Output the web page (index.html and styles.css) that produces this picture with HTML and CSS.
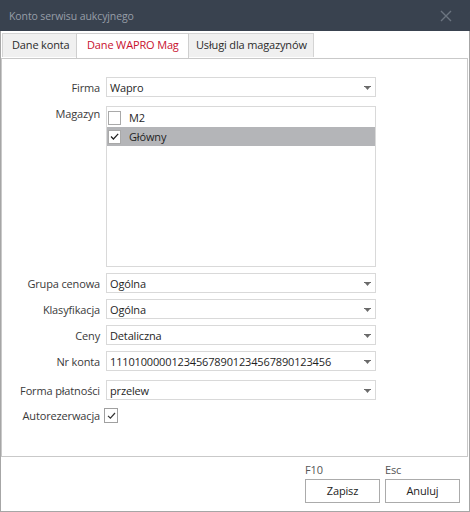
FILE: index.html
```html
<!DOCTYPE html>
<html lang="pl">
<head>
<meta charset="utf-8">
<title>Konto serwisu aukcyjnego</title>
<link rel="stylesheet" href="styles.css">
</head>
<body>
<div class="window">
  <div class="titlebar">
    <span class="title">Konto serwisu aukcyjnego</span>
    <svg class="close" width="12" height="12" viewBox="0 0 12 12"><path d="M1 1 L11 11 M11 1 L1 11" stroke="#6c7581" stroke-width="1.4" fill="none"/></svg>
  </div>
  <div class="tabs">
    <div class="tab t1">Dane konta</div>
    <div class="tab t2 active">Dane WAPRO Mag</div>
    <div class="tab t3">Usługi dla magazynów</div>
  </div>
  <div class="panel">
    <div class="form">
      <div class="label">Firma</div>
      <div class="combo"><span>Wapro</span><svg class="arrow" width="7" height="4" viewBox="0 0 7 4"><rect x="0" y="0" width="7" height="1" fill="#6a6a6a"/><polygon points="1,1 6,1 3.5,4" fill="#6a6a6a"/></svg></div>

      <div class="label top">Magazyn</div>
      <div class="list">
        <div class="item"><span class="box"></span><span>M2</span></div>
        <div class="item selected"><span class="box"><svg width="11" height="11" viewBox="0 0 11 11"><path d="M2 5.5 L4.4 8 L9.2 2.8" stroke="#222" stroke-width="1.2" fill="none"/></svg></span><span>Główny</span></div>
      </div>

      <div class="label">Grupa cenowa</div>
      <div class="combo"><span>Ogólna</span><svg class="arrow" width="7" height="4" viewBox="0 0 7 4"><rect x="0" y="0" width="7" height="1" fill="#6a6a6a"/><polygon points="1,1 6,1 3.5,4" fill="#6a6a6a"/></svg></div>

      <div class="label">Klasyfikacja</div>
      <div class="combo"><span>Ogólna</span><svg class="arrow" width="7" height="4" viewBox="0 0 7 4"><rect x="0" y="0" width="7" height="1" fill="#6a6a6a"/><polygon points="1,1 6,1 3.5,4" fill="#6a6a6a"/></svg></div>

      <div class="label">Ceny</div>
      <div class="combo"><span>Detaliczna</span><svg class="arrow" width="7" height="4" viewBox="0 0 7 4"><rect x="0" y="0" width="7" height="1" fill="#6a6a6a"/><polygon points="1,1 6,1 3.5,4" fill="#6a6a6a"/></svg></div>

      <div class="label">Nr konta</div>
      <div class="combo"><span>111010000012345678901234567890123456</span><svg class="arrow" width="7" height="4" viewBox="0 0 7 4"><rect x="0" y="0" width="7" height="1" fill="#6a6a6a"/><polygon points="1,1 6,1 3.5,4" fill="#6a6a6a"/></svg></div>

      <div class="label gap">Forma płatności</div>
      <div class="combo gap"><span>przelew</span><svg class="arrow" width="7" height="4" viewBox="0 0 7 4"><rect x="0" y="0" width="7" height="1" fill="#6a6a6a"/><polygon points="1,1 6,1 3.5,4" fill="#6a6a6a"/></svg></div>

      <div class="label chk-label">Autorezerwacja</div>
      <div class="chk-cell"><span class="box small"><svg width="11" height="11" viewBox="0 0 11 11"><path d="M2 5.8 L4.4 8.2 L9 3" stroke="#333" stroke-width="1.2" fill="none"/></svg></span></div>
    </div>
  </div>
  <div class="footer">
    <div class="btncol"><div class="key">F10</div><div class="btn">Zapisz</div></div>
    <div class="btncol"><div class="key">Esc</div><div class="btn">Anuluj</div></div>
  </div>
</div>
</body>
</html>
```

FILE: styles.css
```css
* { box-sizing: border-box; }
html, body { margin: 0; padding: 0; background: #ffffff; }
body {
  font-family: "Open Sans", "Noto Sans", sans-serif;
  font-size: 11px;
  letter-spacing: -0.15px;
  color: #262626;
}
.window {
  width: 470px;
  height: 512px;
  border: 1px solid #a6a6a6;
  border-top: none;
  display: flex;
  flex-direction: column;
  background: #fff;
}
.titlebar {
  flex: 0 0 31px;
  margin: 0 -1px;
  background: #39424f;
  color: #979ea8;
  font-size: 10.5px;
  letter-spacing: -0.1px;
  display: flex;
  align-items: center;
  justify-content: space-between;
  padding: 0 18px 0 9px;
}
.close { display: block; }
.tabs {
  flex: 0 0 26px;
  display: flex;
  padding: 2px 0 0 1px;
  align-items: flex-start;
}
.tab {
  height: 24px;
  border: 1px solid #d4d4d4;
  border-bottom: none;
  background: #f0f0f0;
  line-height: 22px;
  color: #2b2b2b;
  margin-right: -1px;
  white-space: nowrap;
}
.t1 { width: 75px; padding-left: 9px; }
.t2 { width: 113px; padding-left: 10px; }
.t3 { width: 126px; padding-left: 7px; }
.tab.active {
  height: 25px;
  background: #fff;
  color: #c8102e;
  position: relative;
  z-index: 1;
  border-color: #cfcfcf;
}
.panel {
  flex: 0 0 399px;
  border: 1px solid #c9c9c9;
  margin: 0 1px 0 0;
  padding-top: 18px;
}
.form {
  display: grid;
  grid-template-columns: 98px 270px;
  column-gap: 6px;
  row-gap: 6px;
  align-items: center;
}
.label {
  text-align: right;
  color: #3a3a3a;
  white-space: nowrap;
}
.label.top { align-self: start; }
.combo {
  height: 20px;
  border: 1px solid #d9d9d9;
  display: flex;
  align-items: center;
  justify-content: space-between;
  padding: 0 4px 0 3px;
  color: #1f1f1f;
}
.combo .arrow { display: block; margin-top: 1px; }
.form > :nth-child(3), .form > :nth-child(4) { margin-top: 3px; }
.gap { margin-top: 3px; }
.list {
  height: 161px;
  border: 1px solid #d9d9d9;
  padding-top: 1px;
}
.item {
  height: 19px;
  display: flex;
  align-items: center;
  padding-left: 1px;
  gap: 8px;
  color: #1f1f1f;
}
.item.selected { background: #b4b5b8; }
.box {
  width: 13px;
  height: 14px;
  border: 1px solid #a9a9a9;
  background: #fff;
  display: flex;
  align-items: center;
  justify-content: center;
}
.box.small { width: 14px; height: 15px; border-color: #a0a0a0; }
.chk-label { margin-top: 2px; }
.chk-cell { display: flex; margin-left: -2px; margin-top: 2px; }
.footer {
  flex: 1;
  display: flex;
  justify-content: flex-end;
  gap: 5px;
  padding: 5px 9px 0 0;
}
.btncol { display: flex; flex-direction: column; }
.key { color: #555; height: 17px; line-height: 15px; }
.btn {
  width: 75px;
  height: 24px;
  border: 1px solid #ababab;
  background: #fff;
  text-align: center;
  line-height: 21px;
  color: #222;
}
```
